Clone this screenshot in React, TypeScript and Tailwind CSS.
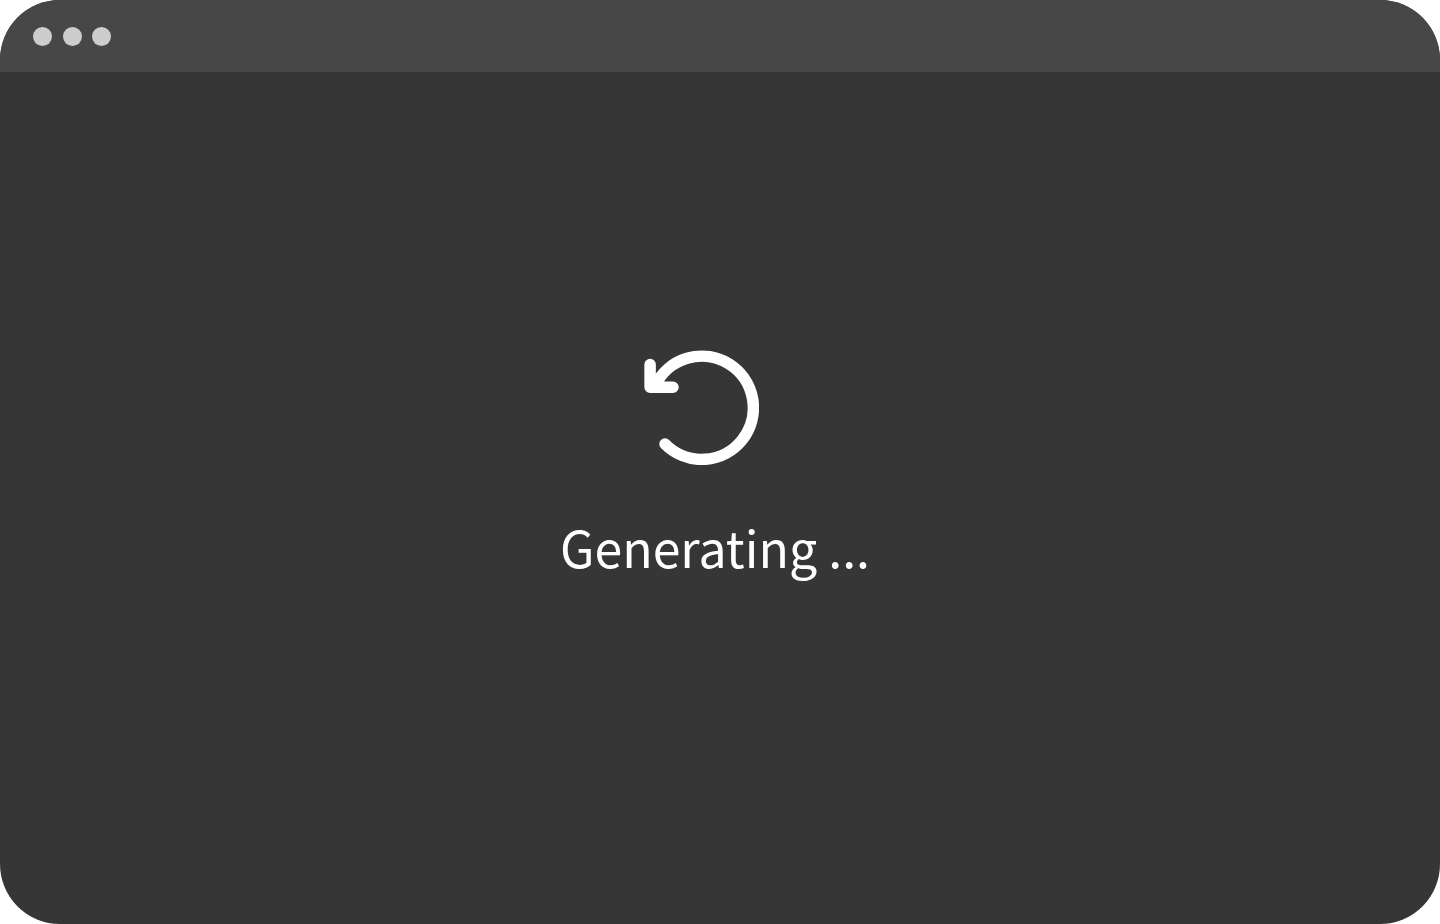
// ── Window chrome ─────────────────────────────────────────────────────────────

function TitleBar() {
  return (
    <header className="flex h-[72px] items-center bg-[#474747] px-[33px]">
      <div className="flex w-[78px] justify-between">
        <span className="size-[19px] rounded-full bg-[#cdcdcd]" />
        <span className="size-[19px] rounded-full bg-[#cdcdcd]" />
        <span className="size-[19px] rounded-full bg-[#cdcdcd]" />
      </div>
    </header>
  )
}

// ── Icon ──────────────────────────────────────────────────────────────────────

function RestartIcon({ className }: { className?: string }) {
  return (
    <svg
      viewBox="0 0 115 115"
      fill="none"
      stroke="currentColor"
      strokeWidth={11.5}
      strokeLinecap="round"
      strokeLinejoin="round"
      className={className}
      aria-hidden="true"
    >
      <path d="M21 94A51.6 51.6 0 1 0 11 36" />
      <path d="M6.1 14.5V37.3H29" />
    </svg>
  )
}

// ── Component ─────────────────────────────────────────────────────────────────

export default function App() {
  return (
    <div className="bg-white">
      <div className="flex min-h-screen flex-col overflow-hidden rounded-[60px] bg-[#363636] font-['Noto_Sans_CJK_SC','Noto_Sans',sans-serif] text-white">
        <TitleBar />

        {/* Loading state */}
        <main
          role="status"
          className="flex flex-1 flex-col items-center justify-center gap-[45px] pr-[10px] pb-[65px]"
        >
          <RestartIcon className="mr-[27px] size-[115px]" />
          <p className="text-[50px] leading-[72px]">Generating ...</p>
        </main>
      </div>
    </div>
  )
}
